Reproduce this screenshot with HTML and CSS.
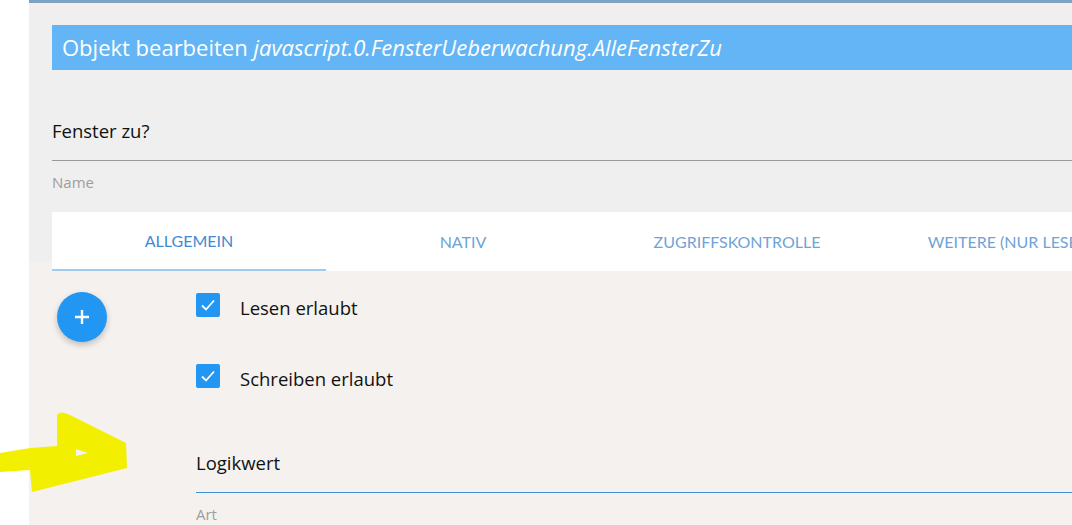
FILE: index.html
```html
<!DOCTYPE html>
<html lang="de">
<head>
<meta charset="utf-8">
<title>Objekt bearbeiten</title>
<link rel="stylesheet" href="styles.css">
</head>
<body>
<div class="page">
  <div class="topbar"></div>
  <div class="strip"></div>
  <div class="header">
    <div class="title">Objekt bearbeiten <em>javascript.0.FensterUeberwachung.AlleFensterZu</em></div>
    <div class="field">
      <div class="field-value">Fenster zu?</div>
      <div class="field-label">Name</div>
    </div>
    <div class="tabs">
      <div class="tab active">ALLGEMEIN</div>
      <div class="tab">NATIV</div>
      <div class="tab">ZUGRIFFSKONTROLLE</div>
      <div class="tab">WEITERE (NUR LESEN)</div>
    </div>
  </div>
  <div class="content">
    <div class="fab-col">
      <div class="fab">
        <svg viewBox="0 0 24 24" width="24" height="24"><path d="M12 5v14M5 12h14" stroke="#fff" stroke-width="2.4" fill="none"/></svg>
      </div>
    </div>
    <div class="form">
      <div class="check-row">
        <span class="checkbox"><svg viewBox="0 0 24 24" width="24" height="24"><path d="M6 12.5l4 4 8-9" stroke="#fff" stroke-width="1.8" fill="none"/></svg></span>
        <span class="check-label">Lesen erlaubt</span>
      </div>
      <div class="check-row">
        <span class="checkbox"><svg viewBox="0 0 24 24" width="24" height="24"><path d="M6 12.5l4 4 8-9" stroke="#fff" stroke-width="1.8" fill="none"/></svg></span>
        <span class="check-label">Schreiben erlaubt</span>
      </div>
      <div class="select-field">
        <div class="select-value">Logikwert</div>
        <div class="field-label">Art</div>
      </div>
    </div>
  </div>
</div>
<svg class="marker" viewBox="0 0 130 100" width="130" height="100">
  <path fill-rule="evenodd" fill="#f2ef00" d="M0,48 L30,43 L57,41 L57,10 Q60,5 70,10 L126,38 L127,63 L32,87 L30,65 L0,67 Z M76,44 L88,48 L76,51 Z"/>
</svg>
</body>
</html>
```
FILE: styles.css
```css
html, body {
  margin: 0;
  padding: 0;
  background: #ffffff;
  height: 525px;
  overflow: hidden;
}
body {
  font-family: "Open Sans", "Noto Sans", sans-serif;
  position: relative;
}
.page {
  margin-left: 29px;
  height: 525px;
  background: #efefef;
  overflow: hidden;
}
.topbar {
  height: 3px;
  background: #7ea2c4;
  box-shadow: 0 1px 3px rgba(0,0,0,0.25);
}
.strip {
  height: 7px;
  background: #f4eeea;
}
.header {
  padding: 15px 0 0 23px;
}
.title {
  height: 45px;
  line-height: 45px;
  background: #64b5f6;
  color: #ffffff;
  font-family: "Open Sans", sans-serif;
  font-size: 22px;
  padding-left: 10px;
  white-space: nowrap;
  overflow: hidden;
}
.title em {
  font-style: italic;
}
.field {
  padding-top: 49px;
}
.field-value {
  font-size: 18.5px;
  color: #111;
  line-height: 24px;
  padding-bottom: 17px;
  border-bottom: 1px solid #9a9a9a;
}
.field-label {
  font-size: 15px;
  color: #9e9e9e;
  line-height: 18px;
  padding-top: 12px;
}
.tabs {
  margin-top: 21px;
  height: 59px;
  background: #ffffff;
  display: flex;
  position: relative;
  z-index: 1;
  white-space: nowrap;
  overflow: hidden;
}
.tab {
  flex: none;
  width: 274px;
  text-align: center;
  line-height: 59px;
  font-family: Lato, "Open Sans", sans-serif;
  font-size: 16px;
  color: #6fa3d6;
  box-sizing: border-box;
}
.tab.active {
  color: #3f8ad2;
  border-bottom: 2px solid #9fcdf2;
  line-height: 57px;
}
.content {
  margin-top: -9px;
  padding: 9px 0 0 23px;
  background: #f4f1ef;
  height: 400px;
  display: grid;
  grid-template-columns: 144px 1fr;
}
.fab-col {
  padding: 21px 0 0 5px;
}
.fab {
  width: 50px;
  height: 50px;
  border-radius: 50%;
  background: #2196f3;
  box-shadow: 0 3px 6px rgba(0,0,0,0.22);
  display: flex;
  align-items: center;
  justify-content: center;
}
.form {
  padding-top: 22px;
}
.check-row {
  display: flex;
  align-items: center;
  height: 24px;
  margin-bottom: 47px;
}
.checkbox {
  width: 24px;
  height: 24px;
  border-radius: 2px;
  background: #2196f3;
  display: inline-block;
}
.checkbox svg {
  display: block;
}
.check-label {
  margin-left: 20px;
  font-size: 18.5px;
  color: #111;
  position: relative;
  top: 2px;
}
.select-field {
  padding-top: 16px;
}
.select-value {
  font-size: 18.5px;
  color: #111;
  line-height: 24px;
  padding-bottom: 17px;
  border-bottom: 1px solid #3d8fd6;
}
.marker {
  position: absolute;
  left: 0;
  top: 405px;
}
```
